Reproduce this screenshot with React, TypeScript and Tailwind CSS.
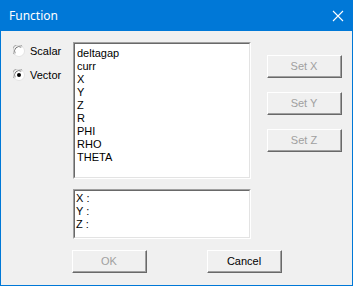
import React from "react";

const sunken =
  "border-t border-l border-t-[#a0a0a0] border-l-[#a0a0a0] border-b border-r border-b-white border-r-white";
const sunkenInner =
  "border-t border-l border-t-[#696969] border-l-[#696969] border-b border-r border-b-[#e3e3e3] border-r-[#e3e3e3]";

function Radio({ checked }: { checked?: boolean }) {
  return (
    <svg width="12" height="12" viewBox="0 0 12 12" className="shrink-0">
      <circle cx="6" cy="6" r="5.5" fill="#fff" stroke="#e3e3e3" />
      <path d="M1.2 9.2 A5.5 5.5 0 0 1 9.2 1.2" fill="none" stroke="#a0a0a0" />
      <path d="M2.3 8.2 A4.3 4.3 0 0 1 8.2 2.3" fill="none" stroke="#696969" />
      <circle cx="6" cy="6" r="3.6" fill="#fff" />
      {checked ? <circle cx="6" cy="6" r="2" fill="#000" /> : null}
    </svg>
  );
}

function ClassicButton({ label, disabled }: { label: string; disabled?: boolean }) {
  return (
    <div className="h-[23px] w-[75px] border-t border-l border-t-white border-l-white border-b border-r border-b-[#696969] border-r-[#696969]">
      <div className="flex h-full w-full items-center justify-center border-b border-r border-b-[#a0a0a0] border-r-[#a0a0a0] bg-[#f0f0f0]">
        <span className={disabled ? "text-[#a0a0a0]" : "text-black"}>{label}</span>
      </div>
    </div>
  );
}

const items = ["deltagap", "curr", "X", "Y", "Z", "R", "PHI", "RHO", "THETA"];

export default function App() {
  return (
    <div className="flex h-[286px] w-[353px] flex-col text-[11px] leading-[13px] [font-family:'Liberation_Sans',Arial,sans-serif]">
      <div className="flex h-[31px] shrink-0 items-center justify-between bg-[#0078d7] pl-[9px] pr-[9px] text-white">
        <span className="text-[12px] [font-family:'Noto_Sans','Open_Sans',sans-serif]">Function</span>
        <svg width="12" height="12" viewBox="0 0 12 12" className="mr-[0px]">
          <path d="M1 1 L11 11 M11 1 L1 11" stroke="#fff" strokeWidth="1.1" />
        </svg>
      </div>
      <div className="flex flex-1 flex-col border-x border-b border-[#0078d7] bg-[#f0f0f0]">
        <div className="flex pt-[11px]">
          <div className="flex w-[72px] flex-col gap-[12px] pl-[12px] pt-[3px]">
            <div className="flex h-[12px] items-center gap-[5px]">
              <Radio />
              <span>Scalar</span>
            </div>
            <div className="flex h-[12px] items-center gap-[5px]">
              <Radio checked />
              <span>Vector</span>
            </div>
          </div>
          <div className="flex w-[178px] flex-col gap-[10px]">
            <div className={`h-[137px] ${sunken}`}>
              <div className={`h-full bg-white pl-[2px] pt-[3px] ${sunkenInner}`}>
                {items.map((item) => (
                  <div key={item}>{item}</div>
                ))}
              </div>
            </div>
            <div className={`h-[50px] ${sunken}`}>
              <div className={`h-full bg-white pl-[1px] pt-[1px] ${sunkenInner}`}>
                <div>X :</div>
                <div>Y :</div>
                <div>Z :</div>
              </div>
            </div>
          </div>
          <div className="ml-[16px] flex flex-col gap-[14px] pt-[13px]">
            <ClassicButton label="Set X" disabled />
            <ClassicButton label="Set Y" disabled />
            <ClassicButton label="Set Z" disabled />
          </div>
        </div>
        <div className="flex gap-[60px] pl-[71px] pt-[11px]">
          <ClassicButton label="OK" disabled />
          <ClassicButton label="Cancel" />
        </div>
      </div>
    </div>
  );
}
